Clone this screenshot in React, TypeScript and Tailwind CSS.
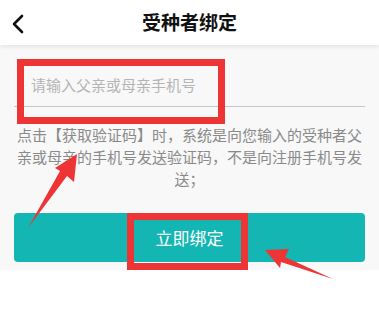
import React from "react";

export default function App() {
  const font = { fontFamily: '"Noto Sans CJK SC", "Noto Sans", sans-serif' };
  return (
    <div className="relative w-[379px] h-[326px] bg-white overflow-hidden" style={font}>
      <div className="relative z-10 h-[45px] bg-white flex items-center justify-center shadow-[0_2px_4px_rgba(0,0,0,0.08)]">
        <svg className="absolute left-[11px] top-[14px]" width="14" height="20" viewBox="0 0 14 20">
          <path d="M11 2 L3 10 L11 18" fill="none" stroke="#111" strokeWidth="2.6" strokeLinecap="round" strokeLinejoin="round" />
        </svg>
        <span className="text-[19px] font-bold text-[#111] tracking-[0px]">受种者绑定</span>
      </div>
      <div className="bg-[#f8f8f8] px-[14px] pb-[8px]">
        <div className="h-[62px] border-b border-[#c8c8c8] flex items-end pb-[10px] pl-[17px]">
          <span className="text-[15px] text-[#b5b5b5] leading-[22px]">请输入父亲或母亲手机号</span>
        </div>
        <p className="mt-[17px] text-[15px] leading-[22px] text-[#8a8a8a] text-center px-[1px]">
          点击【获取验证码】时，系统是向您输入的受种者父亲或母亲的手机号发送验证码，不是向注册手机号发送；
        </p>
        <div className="mt-[23px] h-[49px] rounded-[4px] bg-[#13b6b2] flex items-center justify-center">
          <span className="text-[17px] text-white">立即绑定</span>
        </div>
      </div>
      <div className="absolute left-[17px] top-[59px] w-[208px] h-[65px] border-[7px] border-[#ee3535]" />
      <div className="absolute left-[127px] top-[213px] w-[121px] h-[57px] border-[7px] border-[#ee3535]" />
      <svg className="absolute left-0 top-0 pointer-events-none" width="379" height="326" viewBox="0 0 379 326">
        <polygon points="77,154 74,182 67,176 28,228 60,171 55,168" fill="#ee3535" />
        <polygon points="265,250 289,249 285,257 333,279 281,262 280,268" fill="#ee3535" />
      </svg>
    </div>
  );
}
